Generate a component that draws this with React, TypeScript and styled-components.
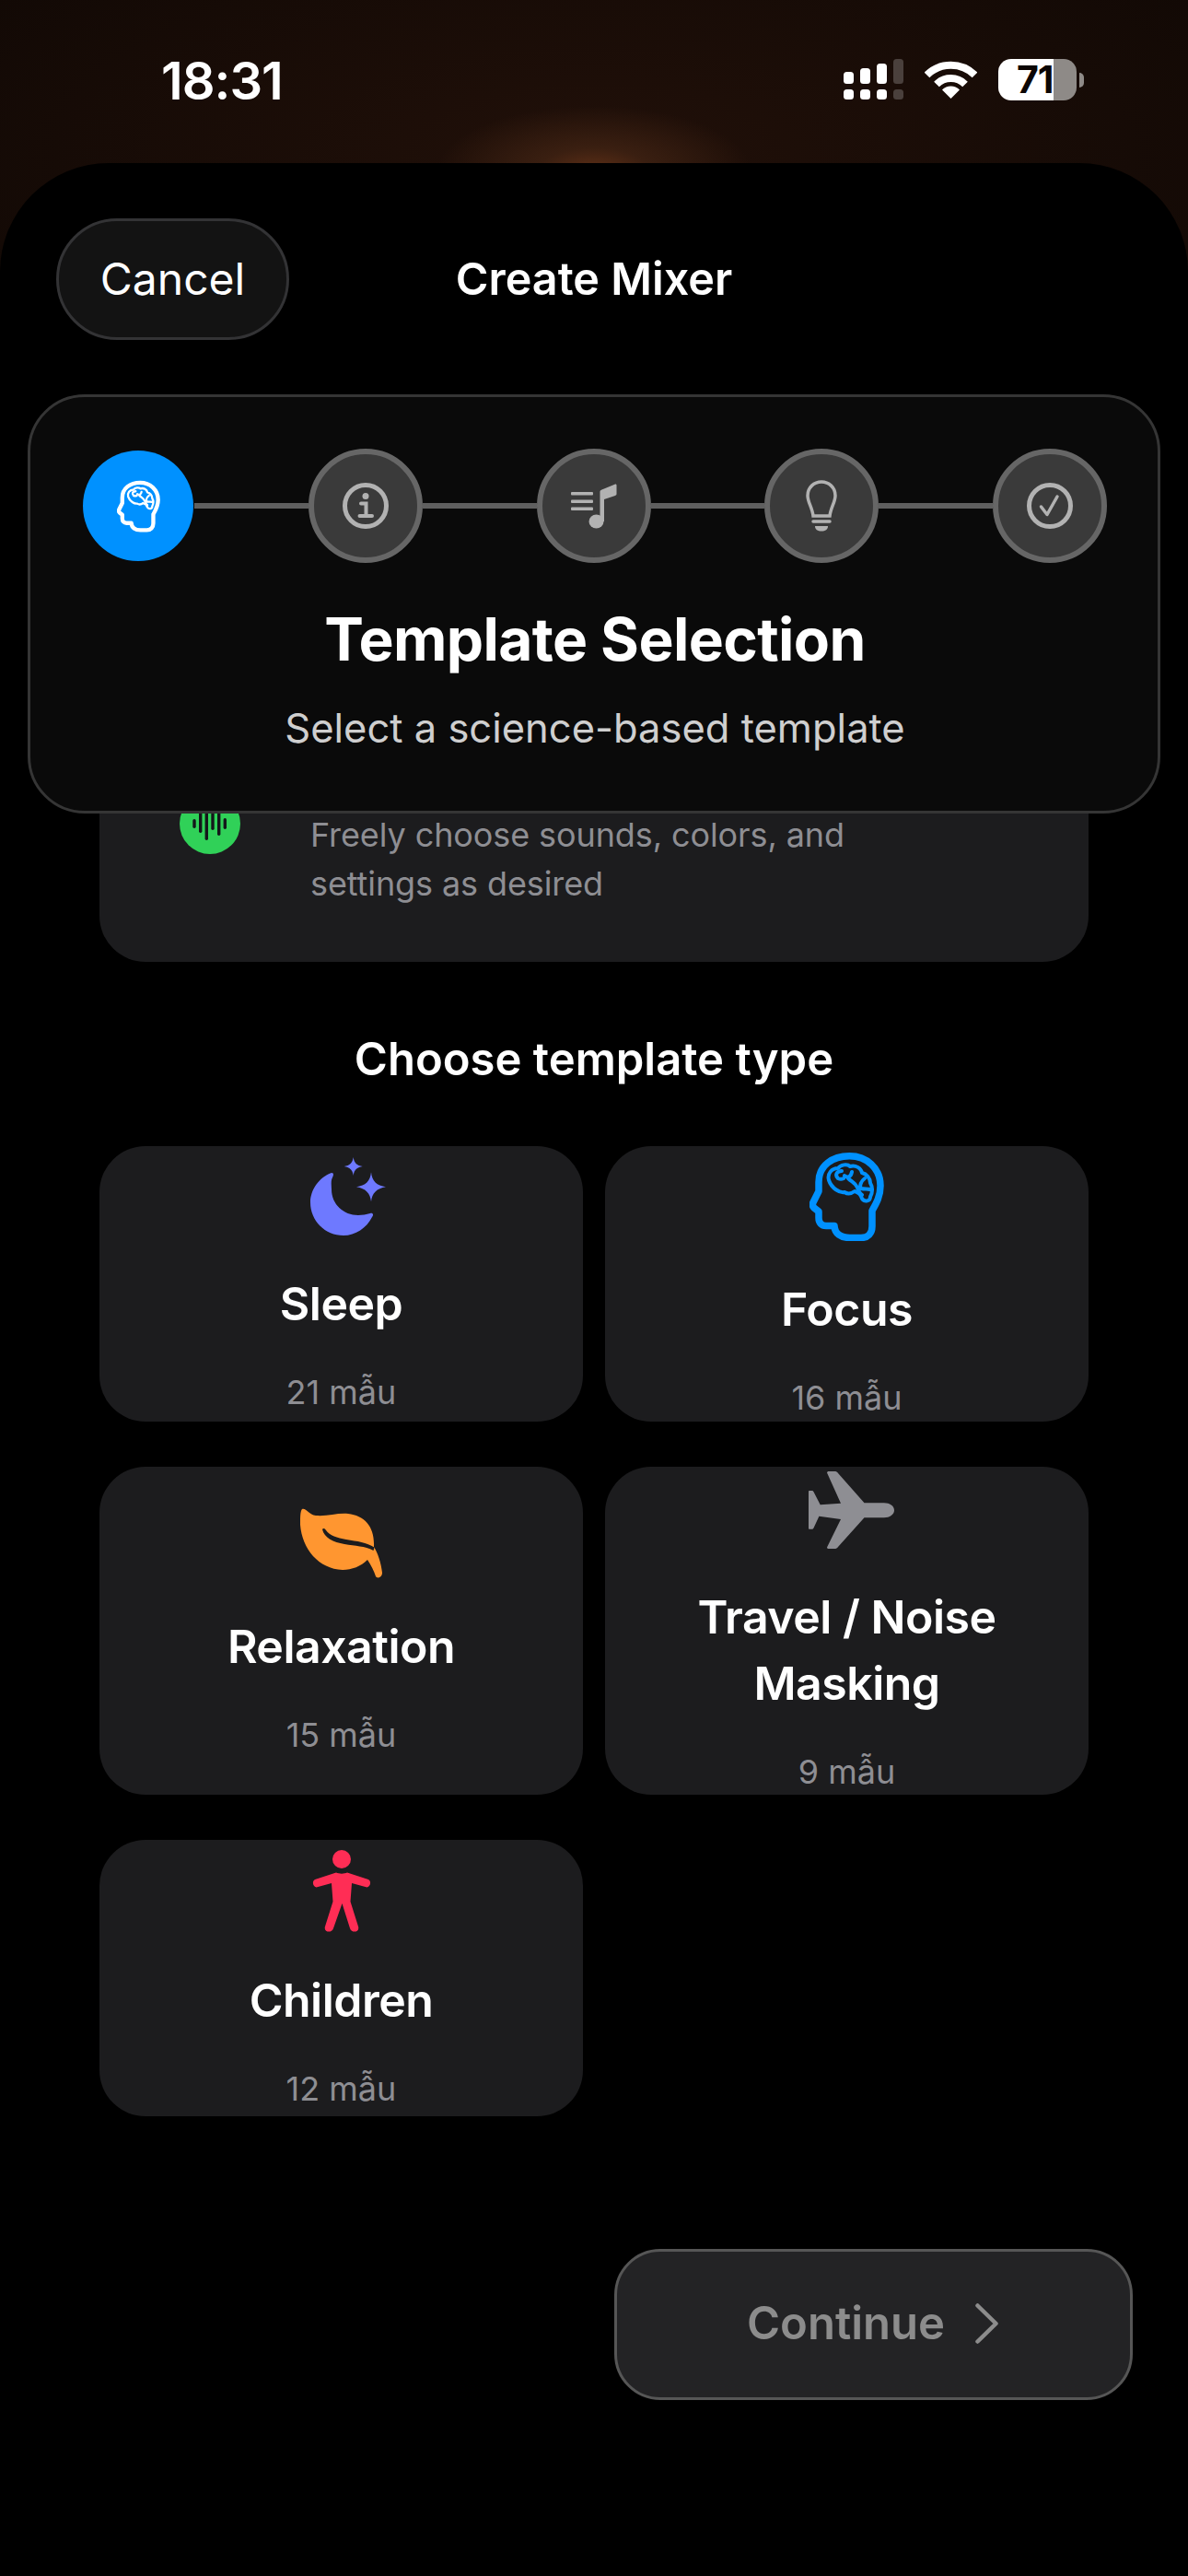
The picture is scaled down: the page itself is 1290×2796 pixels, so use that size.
import React from "react";
import styled, { createGlobalStyle } from "styled-components";

const GlobalStyle = createGlobalStyle`
  * { box-sizing: border-box; }
  html, body { margin: 0; padding: 0; background: #000; }
  body { font-family: Inter, "Noto Sans", "Liberation Sans", sans-serif; }
`;

const Page = styled.div`
  width: 1290px;
  height: 2796px;
  overflow: hidden;
  background:
    radial-gradient(ellipse 170px 70px at 645px 185px, #5c2e16 0%, #3a1f11 35%, rgba(40, 20, 10, 0) 100%),
    radial-gradient(ellipse 800px 300px at 645px 170px, #211009 0%, #120905 100%);
`;

const StatusBar = styled.div`
  height: 177px;
  display: flex;
  justify-content: space-between;
  align-items: flex-start;
  padding: 56px 121px 0 175px;
`;

const Clock = styled.div`
  font-size: 56px;
  line-height: 64px;
  font-weight: 600;
  color: #fff;
  letter-spacing: -1px;
`;

const StatusIcons = styled.div`
  display: flex;
  align-items: flex-start;
  padding: 8px 0 0;
`;

const Battery = styled.div`
  position: relative;
  width: 85px;
  height: 45px;
  margin-left: 23px;
  border-radius: 14px;
  background: linear-gradient(90deg, #fff 0, #fff 60px, #8e8a87 60px, #8e8a87 100%);
  color: #0c0604;
  font-size: 41px;
  line-height: 45px;
  font-weight: 700;
  padding-left: 20px;
  letter-spacing: -1px;

  &::after {
    content: "";
    position: absolute;
    left: 88px;
    top: 15px;
    width: 5px;
    height: 16px;
    border-radius: 0 5px 5px 0;
    background: #8e8a87;
  }
`;

const Sheet = styled.div`
  position: relative;
  height: 2619px;
  background: #000;
  border-radius: 118px 118px 0 0;
  padding: 60px 61px 0 61px;
`;

const NavBar = styled.div`
  display: grid;
  grid-template-columns: 253px 1fr 253px;
  align-items: center;
`;

const CancelButton = styled.button`
  height: 132px;
  padding: 0 0 2px;
  border: 3px solid #333335;
  border-radius: 66px;
  background: #131313;
  color: #fff;
  font-family: inherit;
  font-size: 48px;
  font-weight: 400;
`;

const NavTitle = styled.div`
  text-align: center;
  color: #fff;
  font-size: 48.5px;
  font-weight: 600;
  padding-bottom: 2px;
`;

const StepCard = styled.div`
  position: absolute;
  z-index: 2;
  left: 30px;
  top: 251px;
  width: 1230px;
  height: 455px;
  padding: 58px 58px 0 60px;
  background: #0a0a0a;
  border: 3px solid #353535;
  border-radius: 62px;
  text-align: center;
`;

const StepRow = styled.div`
  display: flex;
  align-items: center;
  width: 1112px;
  margin: -2px 0 0 -3px;
`;

const StepCircle = styled.div<{ $active?: boolean }>`
  flex: none;
  width: ${(p) => (p.$active ? 120 : 124)}px;
  height: ${(p) => (p.$active ? 120 : 124)}px;
  margin-right: ${(p) => (p.$active ? 1 : 0)}px;
  border-radius: 50%;
  display: flex;
  align-items: center;
  justify-content: center;
  background: ${(p) => (p.$active ? "#0091ff" : "#3a3a3a")};
  border: ${(p) => (p.$active ? "none" : "6px solid #666")};
`;

const StepLine = styled.div`
  flex: 1;
  height: 6px;
  background: #5f5f5f;
`;

const StepTitle = styled.div`
  margin-top: 43px;
  color: #fff;
  font-size: 64px;
  line-height: 80px;
  font-weight: 700;
  letter-spacing: -0.6px;
`;

const StepSubtitle = styled.div`
  margin-top: 28px;
  color: #cfcfcf;
  font-size: 43.5px;
  line-height: 56px;
  font-weight: 400;
`;

const Content = styled.div`
  padding: 0 47px;
`;

const CustomCard = styled.div`
  height: 244px;
  margin-top: 431px;
  padding: 80px 0 0 87px;
  background: #1c1c1e;
  border-radius: 50px;
  display: flex;
  gap: 76px;
`;

const GreenDot = styled.div`
  flex: none;
  width: 66px;
  height: 66px;
  margin-top: -19px;
  border-radius: 50%;
  background: #30d158;
`;

const CustomText = styled.div`
  width: 640px;
  color: #8e8e93;
  font-size: 36px;
  line-height: 53px;
  letter-spacing: -0.1px;
`;

const SectionTitle = styled.div`
  height: 200px;
  padding-top: 10px;
  display: flex;
  align-items: center;
  justify-content: center;
  color: #fff;
  font-size: 49px;
  font-weight: 600;
`;

const TemplateGrid = styled.div`
  display: grid;
  grid-template-columns: 525px 525px;
  grid-template-rows: 299px 356px 300px;
  column-gap: 24px;
  row-gap: 49px;
`;

const TemplateCard = styled.div`
  min-height: 0;
  display: flex;
  flex-direction: column;
  align-items: center;
  justify-content: center;
  background: #1c1c1e;
  border-radius: 50px;
  text-align: center;
`;

const TemplateIcon = styled.svg<{ $shift?: number }>`
  flex: none;
  display: block;
  margin-left: ${(p) => p.$shift ?? 0}px;
`;

const TemplateName = styled.div`
  margin-top: 38px;
  color: #fff;
  font-size: 50px;
  line-height: 72px;
  font-weight: 600;
  letter-spacing: -0.5px;
`;

const TemplateCount = styled.div`
  margin-top: 40px;
  color: #8e8e93;
  font-size: 36px;
  line-height: 40px;
`;

const Footer = styled.div`
  display: flex;
  justify-content: flex-end;
  margin-top: 144px;
  margin-right: -48px;
`;

const ContinueButton = styled.button`
  width: 563px;
  height: 164px;
  display: flex;
  align-items: center;
  justify-content: center;
  gap: 33px;
  padding: 0 2px 3px 0;
  border: 3px solid #565656;
  border-radius: 50px;
  background: #232325;
  color: #8c8c8c;
  font-family: inherit;
  font-size: 49px;
  font-weight: 600;
`;

const BrainHead = ({ width, height, color }: { width: number; height: number; color: string }) => (
  <TemplateIcon width={width} height={height} viewBox="0 0 81 96" fill="none" stroke={color} strokeLinejoin="round" strokeLinecap="round">
    <path
      strokeWidth="7.5"
      d="M43.4 3.8C62 3.8 77 17 77 36C77 48 72 56 68 63V80C68 88 63 92.5 56 92.5H44C34 92.5 27.4 88 27 79.5H18C13 79.5 10 76 10 71V64L5 60C3 58 3 56 4 54L10 42V32C10 14 25 3.8 43.4 3.8Z"
    />
    <path
      strokeWidth="4"
      d="M21 30C19 23 24 17 31 17C34 13 41 12 44 15C50 13 56 17 57 22C62 23 66 28 66 33C69 38 68 44 66 48C66 53 60 54 57 50C56 46 53 43 49 42C45 45 41 45 38 43C33 44 24 39 21 30Z"
    />
    <path
      strokeWidth="4"
      d="M35 20C30 20 27 24 31 28C33 29 35 29 37 28M46 21C45 26 42 28 38 25M42 28C46 32 50 33 52 38C53 41 54 44 57 46M60 28C56 31 54 36 56 39C60 40 63 39 66 40"
    />
  </TemplateIcon>
);

const MoonIcon = () => (
  <TemplateIcon $shift={14} width="82" height="85" viewBox="0 0 82 85" fill="#6e79ff">
    <path d="M23 17C26 17 25 20 24 22C22 26 23 30 23 35C23 51 36 63 52 63C56 63 61 62 65 61C68 60 69 63 67 65C61 77 49 85 36 85C16 85 0 69 0 49C0 36 9 22 23 17Z" />
    <path d="M66 16.3C67 26 72 31 82 32.3C72 34 67 39 66 48.3C65 39 60 34 50 32.3C60 31 65 26 66 16.3Z" />
    <path d="M46.7 0C47.3 6 50.5 9.2 56.7 10C50.5 10.8 47.3 14 46.7 20C46 14 42.9 10.8 36.7 10C42.9 9.2 46 6 46.7 0Z" />
  </TemplateIcon>
);

const LeafIcon = () => (
  <TemplateIcon width="89" height="76" viewBox="0 0 89 76">
    <path
      fill="#ff9630"
      d="M2 1C6 -1 9 7 17 8C30 9 40 5 52 6C70 8 81 20 80 42C84 48 88 60 89 70C89 75 84 77 82 74C80 68 77 62 73 56C66 63 56 67 46 67C20 66 2 44 0 18C0 10 0 3 2 1Z"
    />
    <path
      fill="#1c1c1e"
      d="M24 23C25 21 27 22 28 24C32 30 40 32 50 34C62 36 72 37 80.5 42.5L79.5 46C70 41 60 41 48 39C36 37 26 32 24 23Z"
    />
  </TemplateIcon>
);

const PlaneIcon = () => (
  <TemplateIcon $shift={10} width="93" height="84" viewBox="0 0 93 84" fill="#8e8e93">
    <path d="M20 1.5C20 0.5 21 0 22 0H28C30 0 31 0.6 32 2L60.5 34.3H82C88 34.3 93 37.5 93 42.3C93 47 88 50.3 82 50.3H60.5L32 82C31 83.4 30 84 28 84H22C21 84 20 83.5 20 82.5L35 52L11.4 48.7L5.5 61.5C5 62.5 4.5 62.7 3.5 62.7H1C0.4 62.7 0 62.3 0 61.7V22C0 21.4 0.4 21 1 21H3.5C4.5 21 5 21.3 5.5 22.3L12.7 36.3L35 34.7L20 1.5Z" />
  </TemplateIcon>
);

const FigureIcon = () => (
  <TemplateIcon width="66" height="89" viewBox="0 0 66 89" fill="#ff2d55">
    <circle cx="33" cy="10" r="10" />
    <path d="M27 24.5C30 26 36 26 39 24.5L62 32C65 33.5 65 39 60.5 40.5L44 36L42.5 56L51 83C53 89 44 91 42 85L33.5 58L24 85C22 91 13 89 15 83L23.5 56L22 36L5.5 40.5C1 39 1 33.5 4 32Z" />
  </TemplateIcon>
);

const InfoGlyph = () => (
  <svg width="50" height="50" viewBox="0 0 50 50" fill="none" stroke="#b2b2b2" strokeWidth="5">
    <circle cx="25" cy="25" r="22.5" />
    <circle cx="25" cy="14.5" r="3.5" fill="#b2b2b2" stroke="none" />
    <path strokeWidth="4" strokeLinecap="round" d="M20 22.5H25.5V35M18.5 36H32" />
  </svg>
);

const MusicListGlyph = () => (
  <svg width="50" height="49" viewBox="0 0 50 49" fill="#b2b2b2">
    <rect x="0" y="9" width="24" height="3.5" rx="1" />
    <rect x="0" y="17.5" width="24" height="3.5" rx="1" />
    <rect x="0" y="25.5" width="24" height="3.5" rx="1" />
    <ellipse cx="27.5" cy="41" rx="8" ry="7.5" />
    <path d="M31.5 41V9C31.5 7.5 32 7 33.5 6.5L47.5 0.7C49 0.2 49.5 0.7 49.5 2V11C49.5 12 49 12.5 48 13L36 17V41Z" />
  </svg>
);

const BulbGlyph = () => (
  <svg width="34" height="56" viewBox="0 0 34 56" fill="none" stroke="#b2b2b2" strokeWidth="3.5">
    <path d="M17 2C25 2 32 8 32 17C32 24 27 30 26 39H8C7 30 2 24 2 17C2 8 9 2 17 2Z" />
    <path strokeLinecap="round" d="M8 45H26" />
    <path fill="#b2b2b2" stroke="none" d="M10 50H24C24 54 21 55.5 17 55.5C13 55.5 10 54 10 50Z" />
  </svg>
);

const CheckGlyph = () => (
  <svg width="50" height="50" viewBox="0 0 50 50" fill="none" stroke="#b2b2b2">
    <circle cx="25" cy="25" r="22.5" strokeWidth="5" />
    <path strokeWidth="3.5" strokeLinecap="round" strokeLinejoin="round" d="M15.5 26L22 34.5L33 15" />
  </svg>
);

const WaveGlyph = () => (
  <svg width="66" height="66" viewBox="0 0 66 66" fill="#14171a">
    <rect x="14.3" y="28" width="3.4" height="10" rx="1.7" />
    <rect x="21" y="15" width="3.4" height="28" rx="1.7" />
    <rect x="27.6" y="15" width="3.4" height="36" rx="1.7" />
    <rect x="34.3" y="15" width="3.4" height="25" rx="1.7" />
    <rect x="41" y="15" width="3.4" height="31" rx="1.7" />
    <rect x="47.6" y="27" width="3.4" height="12" rx="1.7" />
  </svg>
);

const SignalGlyph = () => (
  <svg width="65" height="44" viewBox="0 0 65 44" fill="#fff">
    <rect x="0" y="14" width="11" height="13" rx="3.5" />
    <rect x="18" y="10" width="11" height="17" rx="3.5" />
    <rect x="36" y="5" width="11" height="22" rx="3.5" />
    <rect x="54" y="0" width="11" height="27" rx="3.5" fill="#4a403c" />
    <rect x="0" y="33" width="11" height="11" rx="3.5" />
    <rect x="18" y="33" width="11" height="11" rx="3.5" />
    <rect x="36" y="33" width="11" height="11" rx="3.5" />
    <rect x="54" y="33" width="11" height="11" rx="3.5" fill="#4a403c" />
  </svg>
);

const WifiSvg = styled.svg`
  margin: 2px 0 0 23px;
`;

const WifiGlyph = () => (
  <WifiSvg width="57" height="41" viewBox="0 0 57 41" fill="none" stroke="#fff" strokeWidth="8">
    <path d="M2.5 15.5A37 37 0 0 1 54.5 15.5" />
    <path d="M13 25.5A22 22 0 0 1 44 25.5" />
    <path fill="#fff" stroke="none" d="M28.5 41L19 31.5A13.5 13.5 0 0 1 38 31.5Z" />
  </WifiSvg>
);

const templates = [
  { name: "Sleep", count: "21 mẫu", icon: <MoonIcon /> },
  { name: "Focus", count: "16 mẫu", icon: <BrainHead width={81} height={96} color="#0091ff" /> },
  { name: "Relaxation", count: "15 mẫu", icon: <LeafIcon /> },
  { name: <>Travel / Noise<br />Masking</>, count: "9 mẫu", icon: <PlaneIcon /> },
  { name: "Children", count: "12 mẫu", icon: <FigureIcon /> },
];

const App: React.FC = () => {
  return (
    <>
      <GlobalStyle />
      <Page>
        <StatusBar>
          <Clock>18:31</Clock>
          <StatusIcons>
            <SignalGlyph />
            <WifiGlyph />
            <Battery>71</Battery>
          </StatusIcons>
        </StatusBar>
        <Sheet>
          <NavBar>
            <CancelButton>Cancel</CancelButton>
            <NavTitle>Create Mixer</NavTitle>
          </NavBar>

          <StepCard>
            <StepRow>
              <StepCircle $active>
                <BrainHead width={47} height={57} color="#fff" />
              </StepCircle>
              <StepLine />
              <StepCircle><InfoGlyph /></StepCircle>
              <StepLine />
              <StepCircle><MusicListGlyph /></StepCircle>
              <StepLine />
              <StepCircle><BulbGlyph /></StepCircle>
              <StepLine />
              <StepCircle><CheckGlyph /></StepCircle>
            </StepRow>
            <StepTitle>Template Selection</StepTitle>
            <StepSubtitle>Select a science-based template</StepSubtitle>
          </StepCard>

          <Content>
            <CustomCard>
              <GreenDot><WaveGlyph /></GreenDot>
              <CustomText>Freely choose sounds, colors, and settings as desired</CustomText>
            </CustomCard>
            <SectionTitle>Choose template type</SectionTitle>
            <TemplateGrid>
              {templates.map((t) => (
                <TemplateCard key={t.count}>
                  {t.icon}
                  <TemplateName>{t.name}</TemplateName>
                  <TemplateCount>{t.count}</TemplateCount>
                </TemplateCard>
              ))}
            </TemplateGrid>
            <Footer>
              <ContinueButton>
                Continue
                <svg width="25" height="44" viewBox="0 0 25 44" fill="none" stroke="#8c8c8c" strokeWidth="4.5" strokeLinecap="round" strokeLinejoin="round">
                  <path d="M2.5 2.5L22.5 22L2.5 41.5" />
                </svg>
              </ContinueButton>
            </Footer>
          </Content>
        </Sheet>
      </Page>
    </>
  );
};

export default App;
